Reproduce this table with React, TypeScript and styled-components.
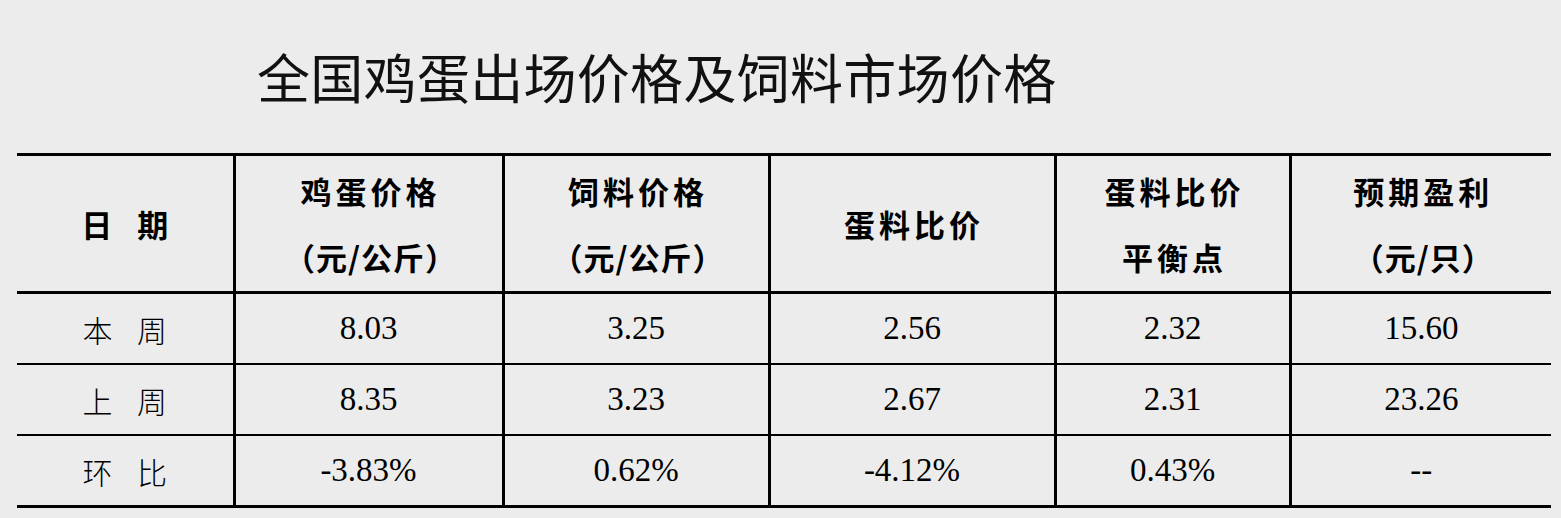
import { FC } from 'react'
import styled, { createGlobalStyle } from 'styled-components'

const GlobalStyle = createGlobalStyle`
  html, body {
    margin: 0;
    padding: 0;
    background: #ececec;
  }
  body {
    font-family: 'Noto Sans CJK SC', sans-serif;
    color: #000;
  }
`

const PageWrapper = styled.div`
  width: 1561px;
  height: 518px;
  background: #ececec;
  overflow: hidden;
`

const Title = styled.h1`
  margin: 0;
  padding: 44px 0 0 257px;
  height: 153px;
  box-sizing: border-box;
  font-family: 'Noto Sans CJK SC', sans-serif;
  font-weight: 400;
  font-size: 53px;
  letter-spacing: 0.3px;
  line-height: 64px;
  color: #111;
`

const Table = styled.table`
  margin-left: 17px;
  width: 1534px;
  border-collapse: collapse;
  table-layout: fixed;
  border-top: 3px solid #000;
  border-bottom: 3px solid #000;
`

const HeadCell = styled.th`
  height: 135px;
  padding: 0 0 0 4px;
  border-bottom: 3px solid #000;
  border-left: 3px solid #000;
  font-family: 'Noto Sans CJK SC', sans-serif;
  font-weight: 700;
  font-size: 31px;
  letter-spacing: 4px;
  word-spacing: 10px;
  text-align: center;
  vertical-align: middle;

  &:first-child {
    border-left: none;
  }
`

const HeadLine = styled.div<{ $unit?: boolean }>`
  line-height: 66px;
  letter-spacing: ${({ $unit }) => ($unit ? '1px' : '4px')};
`

const Cell = styled.td<{ $label?: boolean }>`
  height: 69px;
  padding: 0;
  border-top: 2px solid #000;
  border-left: 3px solid #000;
  text-align: center;
  vertical-align: middle;
  font-family: ${({ $label }) =>
    $label ? "'Noto Sans CJK SC', sans-serif" : "'Liberation Serif', serif"};
  font-weight: ${({ $label }) => ($label ? 300 : 400)};
  font-size: ${({ $label }) => ($label ? '30px' : '33px')};
  word-spacing: ${({ $label }) => ($label ? '18px' : '0')};

  &:first-child {
    border-left: none;
  }
`

const BodyRow = styled.tr`
  &:first-child td {
    border-top: none;
  }
`

const columns = [217, 269, 266, 286, 235, 261]

const headers: string[][] = [
  ['日 期'],
  ['鸡蛋价格', '（元/公斤）'],
  ['饲料价格', '（元/公斤）'],
  ['蛋料比价'],
  ['蛋料比价', '平衡点'],
  ['预期盈利', '（元/只）'],
]

const rows: string[][] = [
  ['本 周', '8.03', '3.25', '2.56', '2.32', '15.60'],
  ['上 周', '8.35', '3.23', '2.67', '2.31', '23.26'],
  ['环 比', '-3.83%', '0.62%', '-4.12%', '0.43%', '--'],
]

const App: FC = () => {
  return (
    <PageWrapper>
      <GlobalStyle />
      <Title>全国鸡蛋出场价格及饲料市场价格</Title>
      <Table>
        <colgroup>
          {columns.map((w, i) => (
            <col key={i} style={{ width: w }} />
          ))}
        </colgroup>
        <thead>
          <tr>
            {headers.map((lines, i) => (
              <HeadCell key={i}>
                {lines.map((l) => (
                  <HeadLine key={l} $unit={l.startsWith('（')}>
                    {l}
                  </HeadLine>
                ))}
              </HeadCell>
            ))}
          </tr>
        </thead>
        <tbody>
          {rows.map((row) => (
            <BodyRow key={row[0]}>
              {row.map((v, i) => (
                <Cell key={i} $label={i === 0}>
                  {v}
                </Cell>
              ))}
            </BodyRow>
          ))}
        </tbody>
      </Table>
    </PageWrapper>
  )
}

export default App
